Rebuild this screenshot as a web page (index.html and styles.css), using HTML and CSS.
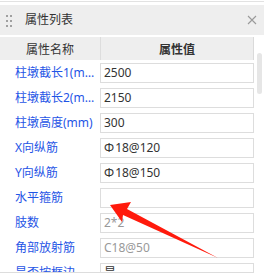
FILE: index.html
```html
<!DOCTYPE html>
<html lang="zh-CN">
<head>
    <meta charset="UTF-8">
    <title>属性列表</title>
    <link rel="stylesheet" href="styles.css">
</head>
<body>

    <div class="panel">
        <div class="panel-head">
            <span class="grip"><i></i><i></i><i></i><i></i><i></i><i></i></span>
            <span class="title">属性列表</span>
            <svg class="close" width="10" height="10" viewBox="0 0 10 10">
                <path d="M1 1 L9 9 M9 1 L1 9" stroke="#9a9a9a" stroke-width="1.1" fill="none"/>
            </svg>
        </div>

        <div class="panel-body">
            <div class="grid">
                <div class="grid-head">
                    <div class="col-name">属性名称</div>
                    <div class="col-value">属性值</div>
                </div>
                <div class="rows">
                    <div class="row"><div class="name">柱墩截长1(mm)</div><div class="value">2500</div></div>
                    <div class="row"><div class="name">柱墩截长2(mm)</div><div class="value">2150</div></div>
                    <div class="row"><div class="name">柱墩高度(mm)</div><div class="value">300</div></div>
                    <div class="row"><div class="name">X向纵筋</div><div class="value"><span class="bar">Φ</span>18@120</div></div>
                    <div class="row"><div class="name">Y向纵筋</div><div class="value"><span class="bar">Φ</span>18@150</div></div>
                    <div class="row"><div class="name">水平箍筋</div><div class="value"></div></div>
                    <div class="row"><div class="name">肢数</div><div class="value off">2*2</div></div>
                    <div class="row"><div class="name">角部放射筋</div><div class="value off">C18@50</div></div>
                    <div class="row"><div class="name">是否按框边</div><div class="value">是</div></div>
                </div>
            </div>
            <div class="scroll"><div class="thumb"></div></div>
        </div>
    </div>

    <!-- red annotation arrow -->
    <svg class="arrow" width="264" height="277" viewBox="0 0 264 277">
        <polygon points="110,205 131,202 127,209 218,258 123,215 122,222" fill="#ff1a0c"/>
    </svg>

</body>
</html>
```

FILE: styles.css
```css
body {
    margin: 0;
    width: 264px;
    height: 277px;
    overflow: hidden;
    background: #fff;
    font-family: "Noto Sans", "Noto Sans CJK SC", sans-serif;
    font-size: 12px;
    color: #333;
    position: relative;
}

.panel {
    margin-top: 1px;
    border-top: 1px solid #e2e2e2;
    padding-top: 3px;
}

.panel-head {
    height: 30px;
    background: #eeeeee;
    display: flex;
    align-items: center;
    padding: 0 6px;
}

.grip {
    display: grid;
    grid-template-columns: 2px 2px;
    grid-auto-rows: 2px;
    column-gap: 2px;
    row-gap: 3px;
    margin-top: 1px;
}

.grip i {
    display: block;
    background: #a0a0a0;
}

.title {
    margin-left: 13px;
    line-height: 1;
}

.close {
    margin-left: auto;
    margin-right: 1px;
}

.panel-body {
    display: flex;
    margin-top: 2px;
}

.grid {
    width: 254px;
}

.grid-head {
    display: flex;
    height: 23px;
    background: #eeeeee;
    border-right: 1px solid #dadada;
}

.grid-head div {
    display: flex;
    align-items: center;
    justify-content: center;
}

.col-name {
    width: 100px;
    border-right: 1px solid #dddddd;
}

.col-value {
    flex: 1;
    font-weight: bold;
}

.rows {
    height: 212px;
    overflow: hidden;
    border-bottom: 1px solid #dddddd;
}

.row {
    display: flex;
    height: 25px;
    align-items: flex-start;
}

.name {
    width: 100px;
    box-sizing: border-box;
    padding: 0 5px 0 15px;
    line-height: 20px;
    margin-top: 3px;
    color: #1f55e6;
    white-space: nowrap;
    overflow: hidden;
    text-overflow: ellipsis;
}

.value {
    flex: 1;
    height: 20px;
    margin-top: 3px;
    box-sizing: border-box;
    border: 1px solid #dddddd;
    padding-left: 3px;
    line-height: 18px;
    color: #333;
    background: #fff;
}

.value.off {
    color: #999;
}

.bar {
    display: inline-block;
    margin-right: 1px;
}

.scroll {
    flex: 1;
    position: relative;
}

.thumb {
    width: 5px;
    height: 41px;
    margin: 16px 0 0 3px;
    border-radius: 3px;
    background: #e6e6e6;
}

.arrow {
    position: absolute;
    left: 0;
    top: 0;
    pointer-events: none;
}
```
